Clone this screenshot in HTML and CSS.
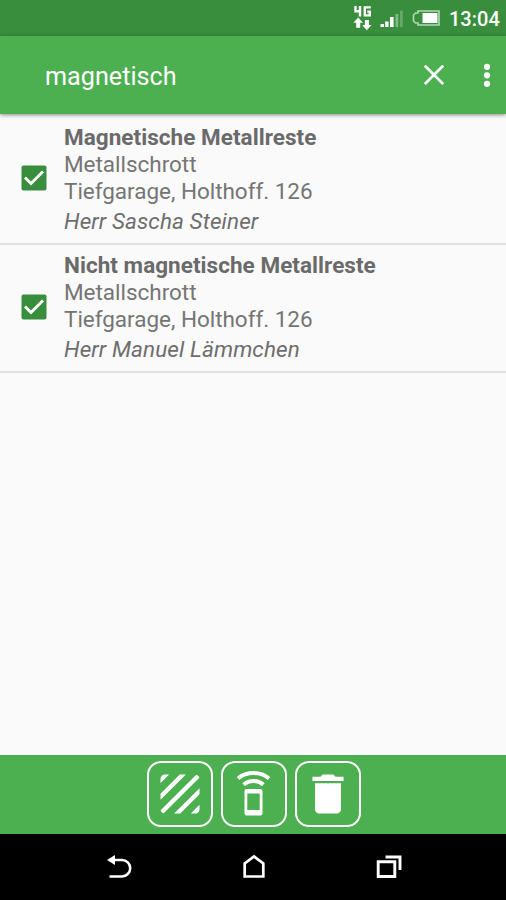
FILE: index.html
```html
<!DOCTYPE html>
<html lang="de">
<head>
<meta charset="utf-8">
<title>magnetisch</title>
<link rel="stylesheet" href="styles.css">
</head>
<body>
<div class="screen">
  <div class="status">
    <svg class="status-icons" width="90" height="35" viewBox="352 0 90 35">
      <g fill="none" stroke="#fff" stroke-width="2.400">
        <path d="M355.500 6v5.200h5M360 6v10.500M370.800 7.400h-6v8h5v-3.800h-2.500"/>
      </g>
      <path fill="#fff" d="M358.200 17.500l4.800 5.300h-2.800v5h-4v-5h-2.800zM366.800 30.300l-4.600-5.300h2.700v-5h4v5h2.700z"/>
      <path fill="#fff" d="M380.500 24h3.400v3h-3.400zM385.200 21.500h3.400v5.500h-3.400zM390 17h3.600v10H390z"/>
      <path fill="#82bb85" d="M395.500 14h2.800v13h-2.800z"/>
      <path fill="#65a969" d="M400 10.500h2.800V27H400z"/>
      <path fill="none" stroke="#b5d8b7" stroke-width="1.600" d="M418 11h21v14h-21v-2h-2.500l-2-2v-6l2-2h2.500z"/>
      <path fill="#fff" d="M422.500 13h15v10h-15z"/>
    </svg>
    <span class="clock">13:04</span>
  </div>
  <header class="appbar">
    <span class="query">magnetisch</span>
    <svg class="close" width="20" height="20" viewBox="0 0 20 20"><path d="M.8.600l18.400 18.400M19.200.600L.8 19" fill="none" stroke="#fff" stroke-width="2.700"/></svg>
    <svg class="more" width="8" height="26" viewBox="0 0 8 26" fill="#fff"><circle cx="4" cy="3.800" r="3.100"/><circle cx="4" cy="12.300" r="3.100"/><circle cx="4" cy="20.800" r="3.100"/></svg>
  </header>
  <main class="list">
    <section class="item">
      <svg class="check" width="26" height="26" viewBox="0 0 26 26"><rect x=".5" y=".5" width="25" height="25" rx="2" fill="#388e3c"/><path d="M4 12.500l6 6L22 6.500" fill="none" stroke="#fff" stroke-width="2.800"/></svg>
      <div class="details">
        <div class="title">Magnetische Metallreste</div>
        <div class="line kind">Metallschrott</div>
        <div class="line place">Tiefgarage, Holthoff. 126</div>
        <div class="person">Herr Sascha Steiner</div>
      </div>
    </section>
    <section class="item">
      <svg class="check" width="26" height="26" viewBox="0 0 26 26"><rect x=".5" y=".5" width="25" height="25" rx="2" fill="#388e3c"/><path d="M4 12.500l6 6L22 6.500" fill="none" stroke="#fff" stroke-width="2.800"/></svg>
      <div class="details">
        <div class="title">Nicht magnetische Metallreste</div>
        <div class="line kind">Metallschrott</div>
        <div class="line place">Tiefgarage, Holthoff. 126</div>
        <div class="person">Herr Manuel Lämmchen</div>
      </div>
    </section>
  </main>
  <footer class="actions">
    <div class="action"><svg width="52" height="52" viewBox="0 0 24 24" fill="#fff"><path d="M19.510 3.080L3.080 19.510c.09.34.27.65.51.9.25.24.56.42.9.51L20.930 4.490c-.19-.69-.73-1.230-1.420-1.410zM11.880 3L3 11.880v2.830L14.710 3h-2.830zM5 3c-1.100 0-2 .9-2 2v2l4-4H5zm14 18c.55 0 1.050-.22 1.410-.59.37-.36.59-.86.59-1.410v-2l-4 4h2zm-9.710 0h2.830L21 12.120V9.290L9.290 21z"/></svg></div>
    <div class="action"><svg width="62" height="62" viewBox="1.500 1.500 62 62"><g fill="none" stroke="#fff" stroke-width="4"><path d="M16.500 17c8.500-7.300 22.500-7.300 31 0M22.200 23.200c5.500-4.800 14.100-4.800 19.600 0"/></g><path fill="#fff" fill-rule="evenodd" d="M25 27.500h14a2 2 0 0 1 2 2v22.500a2 2 0 0 1-2 2h-14a2 2 0 0 1-2-2v-22.500a2 2 0 0 1 2-2zM25.800 32v16.500h12.400V32z"/></svg></div>
    <div class="action"><svg width="52" height="52" viewBox="0 0 24 24" fill="#fff"><path d="M6 19c0 1.100.9 2 2 2h8c1.100 0 2-.9 2-2V7H6v12zM19.200 4h-3.700l-1-1h-5l-1 1H4.800v2h14.400V4z"/></svg></div>
  </footer>
  <nav class="navbar">
    <svg width="26" height="26" viewBox="106 854 26 26"><path d="M112 860h10a8.200 8.200 0 0 1 0 16.400H109.500" fill="none" stroke="#fff" stroke-width="2.500"/><path d="M107 860l8-5v10z" fill="#fff"/></svg>
    <svg width="26" height="26" viewBox="240.500 854 26 26"><path d="M244.200 876.500v-13l9.300-7 9.300 7v13z" fill="none" stroke="#fff" stroke-width="2.700"/></svg>
    <svg width="26" height="26" viewBox="376 854 26 26"><path d="M378.200 861.700h16.600v14.800h-16.600zM385.500 857h14.500v13" fill="none" stroke="#fff" stroke-width="2.900"/></svg>
  </nav>
</div>
</body>
</html>
```
FILE: styles.css
```css
* { box-sizing: border-box; }
body { margin: 0; font-family: Roboto, "Liberation Sans", sans-serif; }
svg { display: block; flex: none; }
.screen { width: 506px; height: 900px; display: flex; flex-direction: column; background: #fafafa; overflow: hidden; }
.status { height: 36px; flex: none; display: flex; align-items: flex-start; padding-left: 352px; background: #388e3c; color: #fff; }
.clock { margin-left: 7px; font-size: 20px; font-weight: 500; line-height: 38px; white-space: nowrap; }
.appbar { height: 78px; flex: none; display: flex; align-items: center; padding-left: 45px; background: #4caf50; color: #fff; box-shadow: 0 1px 4px rgba(0, 0, 0, .45); position: relative; }
.query { flex: none; width: 378px; font-size: 25.200px; line-height: 30px; padding-top: 4px; }
.close { margin-left: 1px; }
.more { margin-left: 39px; margin-top: 2px; }
.list { flex: 1; }
.item { height: 128px; display: flex; align-items: center; padding: 0 0 1px 21px; border-bottom: 2px solid #e2e2e2; color: #757575; }
.item:first-child { height: 131px; padding: 2px 0 0 21px; }
.check { margin-top: -2px; }
.item:first-child .check { margin-top: -3px; }
.details { margin-left: 17px; font-size: 22.500px; line-height: 27px; white-space: nowrap; }
.item:last-child .details { margin-top: -1px; }
.line { letter-spacing: -.03px; }
.title { font-weight: 700; color: #6a6a6a; letter-spacing: .04px; }
.person { margin-top: 3px; font-style: italic; color: #6e6e6e; letter-spacing: .1px; }
.actions { height: 79px; flex: none; display: flex; justify-content: center; align-items: center; gap: 8px; padding: 0 0 2px 1px; background: #4caf50; }
.action { width: 66px; height: 66px; display: flex; align-items: center; justify-content: center; border: 2px solid #fff; border-radius: 14px; }
.navbar { height: 66px; flex: none; display: flex; align-items: center; justify-content: space-between; padding: 0 104px 0 106px; background: #000; }
```
